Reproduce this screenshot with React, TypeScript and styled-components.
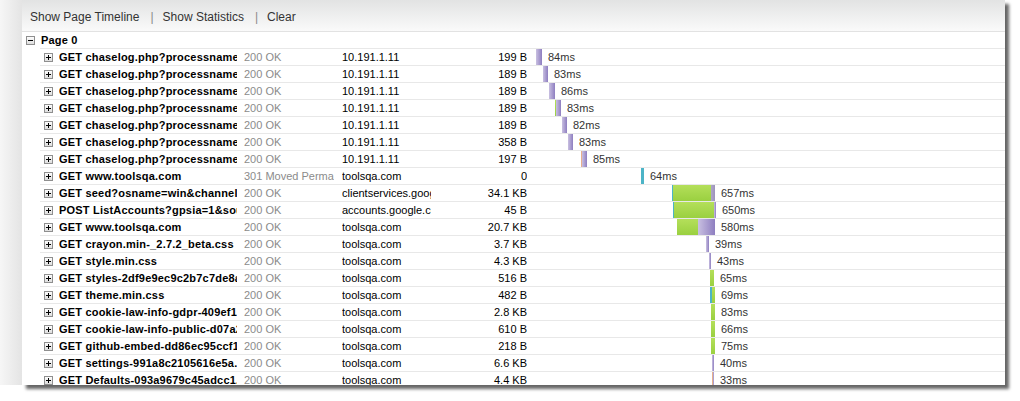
import React from "react";
import styled, { createGlobalStyle } from "styled-components";

const GlobalStyle = createGlobalStyle`
  html, body { margin: 0; padding: 0; background: #ffffff; }
  body { font-family: "Liberation Sans", Arial, sans-serif; }
`;

const Stage = styled.div`
  display: flex;
  align-items: flex-start;
  width: 1020px;
  height: 401px;
  overflow: hidden;
  background: #ffffff;
`;

const LeftShade = styled.div`
  flex: none;
  width: 22px;
  height: 385px;
  background: linear-gradient(to right, #f6f6f6, #e4e4e4);
`;

const Panel = styled.div`
  flex: none;
  width: 983px;
  height: 385px;
  background: #ffffff;
  overflow: hidden;
  box-shadow: 4px 4px 3px rgba(0, 0, 0, 0.6);
`;

const Toolbar = styled.div`
  height: 29px;
  padding-top: 2px;
  padding-left: 8px;
  display: flex;
  align-items: center;
  border-bottom: 1px solid #e2e2e2;
  background: linear-gradient(#e2e3e3, #fafafa);
  font-size: 12px;
  color: #333333;
`;

const ToolLink = styled.span`
  cursor: pointer;
  white-space: nowrap;
`;

const Sep = styled.span`
  margin: 0 9px 0 11px;
  color: #8a8a8a;
`;

const PageRow = styled.div`
  height: 16px;
  display: flex;
  align-items: center;
  gap: 6px;
  padding-left: 4px;
  font-size: 11px;
  font-weight: bold;
  letter-spacing: 0.2px;
  color: #000;
`;

const ChildList = styled.div`
  margin-left: 18px;
`;

const ChildRow = styled.div`
  display: grid;
  grid-template-columns: 19px 185px 98px 89px 96px 1fr;
  height: 16px;
  line-height: 16px;
  border-top: 1px solid #e8e8e8;
  font-size: 11px;
  color: #000;
`;

const ExpCell = styled.div`
  display: flex;
  align-items: center;
  padding-left: 4px;
`;

const Cell = styled.div<{ $muted?: boolean; $bold?: boolean; $right?: boolean; $clip?: number }>`
  overflow: hidden;
  white-space: nowrap;
  margin-right: ${(p) => p.$clip ?? 0}px;
  color: ${(p) => (p.$muted ? "#8b8b8b" : "#000")};
  font-weight: ${(p) => (p.$bold ? "bold" : "normal")};
  letter-spacing: ${(p) => (p.$bold ? "0.2px" : "0")};
  text-align: ${(p) => (p.$right ? "right" : "left")};
`;

const Timeline = styled.div`
  position: relative;
  height: 16px;
`;

const BarGroup = styled.div`
  position: absolute;
  top: 0;
  height: 16px;
  display: flex;
  align-items: stretch;
`;

const segBg: Record<string, string> = {
  p: "linear-gradient(to right, #c9c0e1, #8e7ec0)",
  g: "linear-gradient(#b4df5a, #9ad040)",
  t: "#4cb4c7",
  o: "#e8b08c",
  q: "linear-gradient(to right, #b0a7c8, #9c92bb)",
};

const Seg = styled.div<{ $k: string }>`
  flex: none;
  background: ${(p) => segBg[p.$k]};
`;

const TimeLabel = styled.span`
  margin-left: 6px;
  line-height: 16px;
  color: #333333;
  white-space: nowrap;
`;

const Expander = ({ open }: { open?: boolean }) => (
  <svg width="9" height="9" viewBox="0 0 9 9" style={{ display: "block", flex: "none" }}>
    <defs>
      <linearGradient id={open ? "eg1" : "eg2"} x1="0" y1="0" x2="0" y2="1">
        <stop offset="0" stopColor="#ffffff" />
        <stop offset="1" stopColor="#dcdcdc" />
      </linearGradient>
    </defs>
    <rect x="0.5" y="0.5" width="8" height="8" fill={`url(#${open ? "eg1" : "eg2"})`} stroke="#8f8f8f" />
    <line x1="2" y1="4.5" x2="7" y2="4.5" stroke="#000" strokeWidth="1" />
    {!open && <line x1="4.5" y1="2" x2="4.5" y2="7" stroke="#000" strokeWidth="1" />}
  </svg>
);

type S = { k: string; w: number };
type Row = { name: string; status: string; domain: string; size: string; at: number; segs: S[]; t: string };

const chase = "GET chaselog.php?processname";
const rows: Row[] = [
  { name: chase, status: "200 OK", domain: "10.191.1.11", size: "199 B", at: 9, segs: [{ k: "p", w: 6 }], t: "84ms" },
  { name: chase, status: "200 OK", domain: "10.191.1.11", size: "189 B", at: 16, segs: [{ k: "p", w: 5 }], t: "83ms" },
  { name: chase, status: "200 OK", domain: "10.191.1.11", size: "189 B", at: 22, segs: [{ k: "p", w: 6 }], t: "86ms" },
  { name: chase, status: "200 OK", domain: "10.191.1.11", size: "189 B", at: 28, segs: [{ k: "g", w: 1 }, { k: "p", w: 5 }], t: "83ms" },
  { name: chase, status: "200 OK", domain: "10.191.1.11", size: "189 B", at: 35, segs: [{ k: "p", w: 5 }], t: "82ms" },
  { name: chase, status: "200 OK", domain: "10.191.1.11", size: "358 B", at: 41, segs: [{ k: "p", w: 5 }], t: "83ms" },
  { name: chase, status: "200 OK", domain: "10.191.1.11", size: "197 B", at: 54, segs: [{ k: "o", w: 1 }, { k: "p", w: 5 }], t: "85ms" },
  { name: "GET www.toolsqa.com", status: "301 Moved Permanently", domain: "toolsqa.com", size: "0", at: 114, segs: [{ k: "t", w: 3 }], t: "64ms" },
  { name: "GET seed?osname=win&channel=stable", status: "200 OK", domain: "clientservices.googleapis.com", size: "34.1 KB", at: 145, segs: [{ k: "t", w: 1 }, { k: "g", w: 38 }, { k: "q", w: 4 }], t: "657ms" },
  { name: "POST ListAccounts?gpsia=1&source=ChromiumBrowser", status: "200 OK", domain: "accounts.google.com", size: "45 B", at: 146, segs: [{ k: "t", w: 1 }, { k: "g", w: 40 }, { k: "p", w: 2 }], t: "650ms" },
  { name: "GET www.toolsqa.com", status: "200 OK", domain: "toolsqa.com", size: "20.7 KB", at: 150, segs: [{ k: "g", w: 21 }, { k: "p", w: 17 }], t: "580ms" },
  { name: "GET crayon.min-_2.7.2_beta.css", status: "200 OK", domain: "toolsqa.com", size: "3.7 KB", at: 179, segs: [{ k: "p", w: 3 }], t: "39ms" },
  { name: "GET style.min.css", status: "200 OK", domain: "toolsqa.com", size: "4.3 KB", at: 182, segs: [{ k: "p", w: 2 }], t: "43ms" },
  { name: "GET styles-2df9e9ec9c2b7c7de8a1.css", status: "200 OK", domain: "toolsqa.com", size: "516 B", at: 183, segs: [{ k: "g", w: 4 }], t: "65ms" },
  { name: "GET theme.min.css", status: "200 OK", domain: "toolsqa.com", size: "482 B", at: 183, segs: [{ k: "t", w: 2 }, { k: "g", w: 3 }], t: "69ms" },
  { name: "GET cookie-law-info-gdpr-409ef1.css", status: "200 OK", domain: "toolsqa.com", size: "2.8 KB", at: 184, segs: [{ k: "g", w: 4 }], t: "83ms" },
  { name: "GET cookie-law-info-public-d07a2.css", status: "200 OK", domain: "toolsqa.com", size: "610 B", at: 184, segs: [{ k: "g", w: 4 }], t: "66ms" },
  { name: "GET github-embed-dd86ec95ccf1.css", status: "200 OK", domain: "toolsqa.com", size: "218 B", at: 184, segs: [{ k: "g", w: 4 }], t: "75ms" },
  { name: "GET settings-991a8c2105616e5a.css", status: "200 OK", domain: "toolsqa.com", size: "6.6 KB", at: 185, segs: [{ k: "p", w: 2 }], t: "40ms" },
  { name: "GET Defaults-093a9679c45adcc1.css", status: "200 OK", domain: "toolsqa.com", size: "4.4 KB", at: 185, segs: [{ k: "o", w: 1 }, { k: "p", w: 1 }], t: "33ms" },
];

export default function App() {
  return (
    <>
      <GlobalStyle />
      <Stage>
        <LeftShade />
        <Panel>
          <Toolbar>
            <ToolLink>Show Page Timeline</ToolLink>
            <Sep>|</Sep>
            <ToolLink>Show Statistics</ToolLink>
            <Sep>|</Sep>
            <ToolLink>Clear</ToolLink>
          </Toolbar>
          <PageRow>
            <Expander open />
            <span>Page 0</span>
          </PageRow>
          <ChildList>
            {rows.map((r, i) => (
              <ChildRow key={i}>
                <ExpCell>
                  <Expander />
                </ExpCell>
                <Cell $bold $clip={7}>{r.name}</Cell>
                <Cell $muted $clip={8}>{r.status}</Cell>
                <Cell>{r.domain}</Cell>
                <Cell $right>{r.size}</Cell>
                <Timeline>
                  <BarGroup style={{ left: r.at }}>
                    {r.segs.map((s, j) => (
                      <Seg key={j} $k={s.k} style={{ width: s.w }} />
                    ))}
                    <TimeLabel>{r.t}</TimeLabel>
                  </BarGroup>
                </Timeline>
              </ChildRow>
            ))}
          </ChildList>
        </Panel>
      </Stage>
    </>
  );
}
